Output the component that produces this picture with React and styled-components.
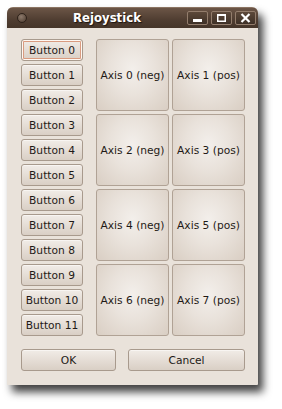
import styled, { createGlobalStyle } from 'styled-components';

const Global = createGlobalStyle`
    html, body {
        margin: 0;
        padding: 0;
        background: #ffffff;
    }
    body {
        width: 282px;
        height: 409px;
        overflow: hidden;
        font-family: 'DejaVu Sans', 'Liberation Sans', sans-serif;
    }
`;

const Window = styled.div`
    margin: 7px 0 0 7px;
    width: 251px;
    height: 378px;
    display: flex;
    flex-direction: column;
    background: #e9e2da;
    border-radius: 6px 6px 1px 1px;
    box-shadow: 5px 7px 9px rgba(0, 0, 0, 0.75);
    overflow: hidden;
`;

const TitleBar = styled.div`
    height: 21px;
    display: flex;
    align-items: center;
    padding: 0 2px 0 10px;
    background: linear-gradient(#6b5546, #4f3d31 60%, #453529);
    border-top: 1px solid #8b7462;
    box-sizing: border-box;
`;

const Knob = styled.div`
    width: 8px;
    height: 8px;
    border-radius: 50%;
    border: 1px solid #2e221a;
    background: radial-gradient(circle at 40% 35%, #8d7a6c, #4a392d);
    flex: none;
`;

const Title = styled.div`
    flex: 1;
    text-align: center;
    color: #ffffff;
    font-weight: bold;
    font-size: 11.7px;
    text-shadow: 1px 1px 1px #1c140e;
`;

const WinButtons = styled.div`
    display: flex;
    gap: 3px;
`;

const WinButton = styled.div`
    width: 21px;
    height: 14px;
    box-sizing: border-box;
    border: 1px solid #937d6c;
    border-radius: 2px;
    background: linear-gradient(#5c4839, #3e3026);
    display: flex;
    align-items: center;
    justify-content: center;
`;

const Body = styled.div`
    flex: 1;
    padding: 11px 13px 14px 14px;
    display: flex;
    flex-direction: column;
    gap: 13px;
`;

const Main = styled.div`
    display: flex;
    gap: 13px;
`;

const ButtonColumn = styled.div`
    display: flex;
    flex-direction: column;
    gap: 3px;
    width: 62px;
`;

const Btn = styled.div`
    height: 22px;
    box-sizing: border-box;
    border: 1px solid #a89a8d;
    border-radius: 3px;
    background: linear-gradient(#f1ece7, #e4dcd4 55%, #d9cfc5);
    display: flex;
    align-items: center;
    justify-content: center;
    font-size: 10.67px;
    color: #1f1a16;
    box-shadow: ${(p) => (p.$focus ? 'inset 0 0 0 1px #fff8f2, inset 0 0 0 2px #d99b80' : 'inset 0 1px 0 #f8f5f2')};
`;

const AxisGrid = styled.div`
    display: grid;
    grid-template-columns: 73px 73px;
    grid-auto-rows: 72px;
    gap: 3px;
`;

const Axis = styled.div`
    box-sizing: border-box;
    border: 1px solid #b0a295;
    border-radius: 3px;
    background: radial-gradient(ellipse at 50% 42%, #f3efeb 0%, #e9e2db 45%, #d9cec3 100%);
    display: flex;
    align-items: center;
    justify-content: center;
    font-size: 10.67px;
    color: #1f1a16;
    white-space: nowrap;
`;

const Footer = styled.div`
    display: flex;
    gap: 12px;
`;

const DialogButton = styled(Btn)`
    width: ${(p) => p.$w}px;
`;

function App() {
    const buttons = Array.from({ length: 12 }, (_, i) => `Button ${i}`);
    const axes = Array.from({ length: 8 }, (_, i) => `Axis ${i} (${i % 2 ? 'pos' : 'neg'})`);

    return (
        <>
            <Global />
            <Window>
                <TitleBar>
                    <Knob />
                    <Title>Rejoystick</Title>
                    <WinButtons>
                        <WinButton>
                            <svg width="11" height="10" viewBox="0 0 11 10">
                                <rect x="1" y="6" width="9" height="3" fill="#fff" />
                            </svg>
                        </WinButton>
                        <WinButton>
                            <svg width="11" height="10" viewBox="0 0 11 10">
                                <rect x="1.75" y="1.75" width="7.5" height="6.5" fill="none" stroke="#fff" strokeWidth="1.5" />
                                <rect x="1" y="1" width="9" height="2" fill="#fff" />
                            </svg>
                        </WinButton>
                        <WinButton>
                            <svg width="11" height="10" viewBox="0 0 11 10">
                                <path d="M1.5 1 L9.5 9 M9.5 1 L1.5 9" stroke="#fff" strokeWidth="2.2" />
                            </svg>
                        </WinButton>
                    </WinButtons>
                </TitleBar>
                <Body>
                    <Main>
                        <ButtonColumn>
                            {buttons.map((b, i) => (
                                <Btn key={b} $focus={i === 0}>
                                    {b}
                                </Btn>
                            ))}
                        </ButtonColumn>
                        <AxisGrid>
                            {axes.map((a) => (
                                <Axis key={a}>{a}</Axis>
                            ))}
                        </AxisGrid>
                    </Main>
                    <Footer>
                        <DialogButton $w={95}>OK</DialogButton>
                        <DialogButton $w={117}>Cancel</DialogButton>
                    </Footer>
                </Body>
            </Window>
        </>
    );
}

export default App;
